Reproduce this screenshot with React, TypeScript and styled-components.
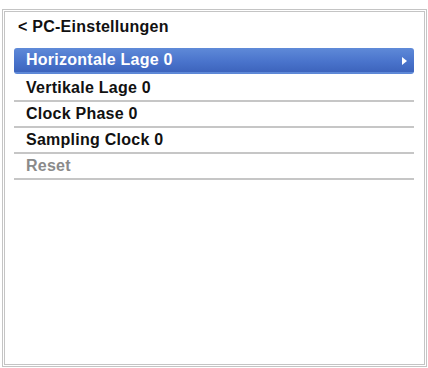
import styled, { createGlobalStyle } from "styled-components";

const GlobalStyle = createGlobalStyle`
  html, body {
    margin: 0;
    padding: 0;
    background: #ffffff;
  }
  body {
    font-family: "Liberation Sans", Arial, sans-serif;
  }
`;

const items = [
  { label: "Horizontale Lage 0", active: true },
  { label: "Vertikale Lage 0" },
  { label: "Clock Phase 0" },
  { label: "Sampling Clock 0" },
  { label: "Reset", disabled: true },
];

const App = () => {
  return (
    <>
      <GlobalStyle />
      <Frame>
        <Title>&lt; PC-Einstellungen</Title>
        <Menu>
          {items.map((item) => (
            <Row
              key={item.label}
              $active={item.active}
              $disabled={item.disabled}
            >
              <span>{item.label}</span>
              {item.active && <Arrow />}
            </Row>
          ))}
        </Menu>
      </Frame>
    </>
  );
};

const Frame = styled.div`
  box-sizing: border-box;
  width: 425px;
  height: 358px;
  margin: 9px 1px 1px 2px;
  border: 3px double #c4c4c4;
  background: #fff;
  padding: 0 10px 0 9px;
`;

const Title = styled.div`
  padding: 6px 0 0 4px;
  margin-bottom: 13px;
  font-size: 16px;
  letter-spacing: 0.25px;
  line-height: 17px;
  font-weight: bold;
  color: #111;
`;

const Menu = styled.div`
  display: flex;
  flex-direction: column;
`;

const Row = styled.div<{ $active?: boolean; $disabled?: boolean }>`
  display: flex;
  align-items: center;
  justify-content: space-between;
  height: 24px;
  padding: 0 7px 0 12px;
  font-size: 16px;
  letter-spacing: 0.25px;
  font-weight: bold;
  color: ${(p) => (p.$active ? "#fff" : p.$disabled ? "#8a8a8a" : "#111")};
  border-bottom: 2px solid ${(p) => (p.$active ? "transparent" : "#c6c6c6")};
  border-radius: ${(p) => (p.$active ? "3px" : "0")};
  background: ${(p) =>
    p.$active ? "linear-gradient(#5f8ad8, #4a74cc 55%, #3d64bd)" : "none"};
  margin-bottom: ${(p) => (p.$active ? "2px" : "0")};
`;

const Arrow = styled.span`
  width: 0;
  height: 0;
  border-top: 4px solid transparent;
  border-bottom: 4px solid transparent;
  border-left: 5px solid #fff;
  margin-top: 2px;
`;

export default App;
